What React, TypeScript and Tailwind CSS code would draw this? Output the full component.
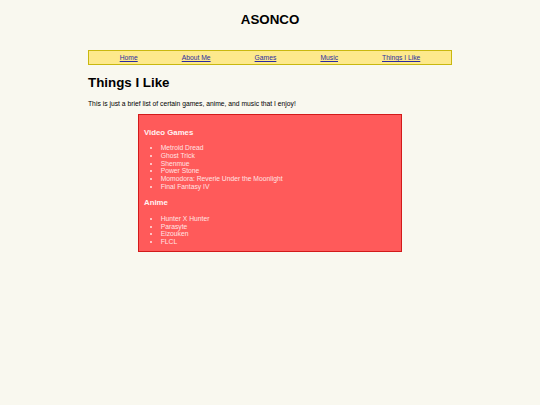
export default function App() {
  const games = [
    "Metroid Dread",
    "Ghost Trick",
    "Shenmue",
    "Power Stone",
    "Momodora: Reverie Under the Moonlight",
    "Final Fantasy IV",
  ];
  const anime = ["Hunter X Hunter", "Parasyte", "Eizouken", "FLCL"];
  const links = ["Home", "About Me", "Games", "Music", "Things I Like"];
  return (
    <div
      className="min-h-[405px] w-full bg-[#f9f8ef] text-black"
      style={{ fontFamily: '"Liberation Sans", Arial, sans-serif' }}
    >
      <div className="mx-auto w-[364px] pt-[12px]">
        <h1 className="text-center text-[13.33px] font-bold leading-[15.3px]">ASONCO</h1>
        <nav className="mt-[23px] flex h-[15px] items-center justify-center gap-[44px] border border-[#c9b80f] bg-[#fde98c]">
          {links.map((l) => (
            <a
              key={l}
              href="#"
              className="text-[6.75px] leading-[7.67px] text-[#2b2ba0] underline"
            >
              {l}
            </a>
          ))}
        </nav>
        <h2 className="mt-[9.5px] text-[13.33px] font-bold leading-[15.3px]">Things I Like</h2>
        <p className="mt-[9.5px] text-[6.75px] leading-[7.67px]">
          This is just a brief list of certain games, anime, and music that I enjoy!
        </p>
        <div className="mx-auto mt-[6.5px] w-[264px] border-[1.5px] border-[#d21a1a] bg-[#ff5a5a] px-[5px] pb-[5px] pt-[5px] text-[#fff2f2]">
          <h3 className="mt-[7.8px] text-[7.8px] font-bold leading-[9px]">Video Games</h3>
          <ul className="mt-[7.8px] list-disc pl-[16.7px] text-[6.75px] leading-[7.67px] text-[#ffe4e4]">
            {games.map((g) => (
              <li key={g}>{g}</li>
            ))}
          </ul>
          <h3 className="mt-[7.8px] text-[7.8px] font-bold leading-[9px]">Anime</h3>
          <ul className="mt-[7.8px] list-disc pl-[16.7px] text-[6.75px] leading-[7.67px] text-[#ffe4e4]">
            {anime.map((g) => (
              <li key={g}>{g}</li>
            ))}
          </ul>
        </div>
      </div>
    </div>
  );
}
